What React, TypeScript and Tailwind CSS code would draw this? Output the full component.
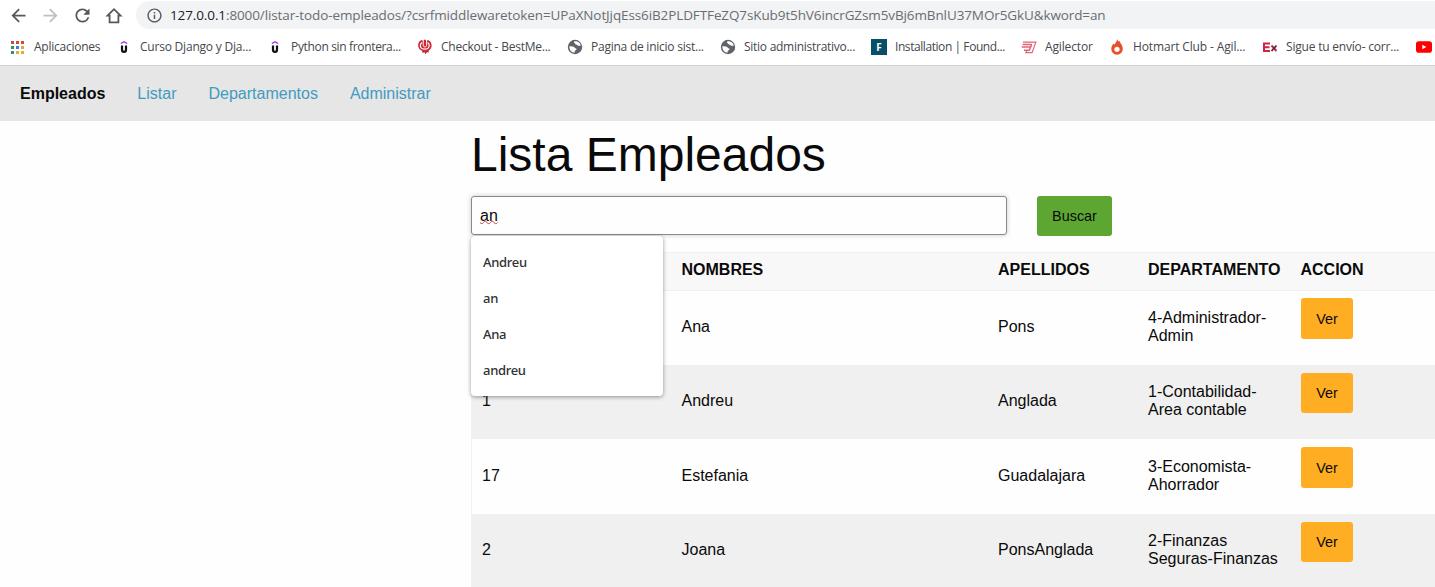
import React from "react";
import { MdArrowBack, MdArrowForward, MdRefresh, MdOutlineInfo } from "react-icons/md";

function UdemyIcon() {
  return (
    <svg viewBox="0 0 16 16" className="h-4 w-4">
      <path d="M4.800 5.200V3.700L8 1.900l3.200 1.800v1.500L8 3.500z" fill="#a435f0" />
      <path d="M6 6.500v4.200c0 1.400.7 2.100 2 2.100s2-.7 2-2.100V6.500" fill="none" stroke="#111" strokeWidth="2.200" />
    </svg>
  );
}

function GlobeIcon() {
  return (
    <svg viewBox="0 0 16 16" className="h-4 w-4">
      <circle cx="8" cy="8" r="7.200" fill="#5f6368" />
      <path d="M2.300 7.600c1.300-.5 3-.3 4.300.2 1 .4.9 1.300 1.900 1.400 1 .1 1.300.7.8 1.500-.6.8-1.600.8-1.700 1.700v1.400c-2.700 0-5.300-2.400-5.300-6.200z" fill="#fff" />
      <path d="M7.500 2.200c-.6.8-.8 1.700.2 2 .9.300.6 1.200 1.500 1.400 1 .2 1 .9 1.800 1.100 1 .2 1.800-.1 2.600.3.400-2.600-2.200-5.200-6.100-4.800z" fill="#fff" />
    </svg>
  );
}

function CheckoutIcon() {
  return (
    <svg viewBox="0 0 16 16" className="h-4 w-4">
      <path d="M4 1.300C1.800 2.500.9 4.600 1.200 7c.3 2.400 1.700 4 3.800 4.700l.6 2.200 1.800-.7 1.200 2.200 1.300-2.200 1.700.2.300-2c1.700-.8 2.600-2.400 2.700-4.600.1-2.400-1-4.400-3-5.500" fill="#cf2837" />
      <path d="M5 3.600C3.700 4.400 3.200 5.600 3.400 7c.3 2 2 3.200 4.400 3.200s4.100-1.200 4.400-3.200c.2-1.400-.3-2.600-1.600-3.400" fill="none" stroke="#fff" strokeWidth="1.200" />
      <path d="M6.200 1v5.200c0 1 .6 1.700 1.700 1.700s1.700-.7 1.700-1.700V1" fill="none" stroke="#fff" strokeWidth="1" />
      <path d="M7.900.8v5.400" stroke="#cf2837" strokeWidth="1.800" />
    </svg>
  );
}

function FoundationIcon() {
  return (
    <span className="flex h-4 w-4 items-center justify-center bg-[#074e68] text-[10px] leading-none font-bold text-white">F</span>
  );
}

function AgilectorIcon() {
  return (
    <svg viewBox="0 0 16 16" className="h-4 w-4" fill="none" stroke="#e06673">
      <path d="M2 3.200h12.800l-3.700 10.400H4.800l1.300-2.400" strokeWidth="1.200" />
      <path d="M1.500 5.500h9.500M.8 8h9.200M10.800 5.500 8.300 11.200H3" strokeWidth="1.500" />
    </svg>
  );
}

function HotmartIcon() {
  return (
    <svg viewBox="0 0 16 16" className="h-4 w-4">
      <path d="M8.200.3c.4 1 .6 1.700 1.200 2.300l.9-.9c.3 1.500 3.500 4.200 3.500 8A5.700 5.900 0 0 1 8 15.800 5.700 5.900 0 0 1 2.300 9.700c0-2.500 1.300-3.900 2.300-5.300l.9 1C6.800 4 7.700 2.400 8.200.3z" fill="#e6502d" />
      <circle cx="8" cy="10.300" r="2.600" fill="#fff" />
    </svg>
  );
}

function ExIcon() {
  return (
    <svg viewBox="0 0 16 16" className="h-4 w-4" fill="none">
      <path d="M8 4.400H2v7.600h6M2 8.200h5.500" stroke="#cf2343" strokeWidth="2" />
      <path d="m9.500 6.500 5 5.500" stroke="#cf2343" strokeWidth="2" />
      <path d="m14.500 6.500-5 5.500" stroke="#56213f" strokeWidth="1.800" />
    </svg>
  );
}

function YoutubeIcon() {
  return (
    <svg viewBox="0 0 16 16" className="h-4 w-4">
      <rect y="2.300" width="16" height="11.400" rx="2.800" fill="#f00" />
      <path d="M6.300 5.700v4.600L10.400 8z" fill="#fff" />
    </svg>
  );
}

const appColors = [
  "bg-[#d9453d]", "bg-[#d9453d]", "bg-[#d9453d]",
  "bg-[#2f9360]", "bg-[#3b7de0]", "bg-[#e6a93c]",
  "bg-[#2f9360]", "bg-[#e6a93c]", "bg-[#e6a93c]",
];

function AppsIcon() {
  return (
    <span className="grid grid-cols-3 gap-[2px]">
      {appColors.map((c, i) => (
        <span key={i} className={`h-[3px] w-[3px] ${c}`} />
      ))}
    </span>
  );
}

const bookmarks = [
  { label: "Aplicaciones", icon: <AppsIcon />, box: "w-[107px]", gap: "w-[25px] pl-[2px]", text: "tracking-[-0.25px]" },
  { label: "Curso Django y Dja...", icon: <UdemyIcon />, box: "w-[151px]", gap: "w-[24px]", text: "tracking-[-0.21px]" },
  { label: "Python sin frontera...", icon: <UdemyIcon />, box: "w-[150px]", gap: "w-[24px]", text: "tracking-[-0.34px]" },
  { label: "Checkout - BestMe...", icon: <CheckoutIcon />, box: "w-[150px]", gap: "w-[24px]", text: "tracking-[-0.23px]" },
  { label: "Pagina de inicio sist...", icon: <GlobeIcon />, box: "w-[153px]", gap: "w-[24px]", text: "tracking-[-0.24px]" },
  { label: "Sitio administrativo...", icon: <GlobeIcon />, box: "w-[151px]", gap: "w-[24px]", text: "tracking-[-0.27px]" },
  { label: "Installation | Found...", icon: <FoundationIcon />, box: "w-[150px]", gap: "w-[24px]", text: "tracking-[-0.43px]" },
  { label: "Agilector", icon: <AgilectorIcon />, box: "w-[88px]", gap: "w-[24px]", text: "tracking-[-0.14px]" },
  { label: "Hotmart Club - Agil...", icon: <HotmartIcon />, box: "w-[153px]", gap: "w-[24px]", text: "tracking-[-0.14px]" },
  { label: "Sigue tu envío- corr...", icon: <ExIcon />, box: "w-[154px]", gap: "w-[24px]", text: "tracking-[-0.20px]" },
  { label: "", icon: <YoutubeIcon />, box: "w-[16px]", gap: "w-[16px]", text: "" },
];

function BrowserBar() {
  return (
    <div className="h-[66px] overflow-hidden border-b border-[#d3d3d3] bg-white font-['Open_Sans','Noto_Sans',sans-serif]">
      <div className="flex h-[29px] items-center pt-px pl-[7.500px] text-[#55585c]">
        <MdArrowBack className="mr-[11px] h-[21px] w-[21px] shrink-0" />
        <MdArrowForward className="mr-[11px] h-[21px] w-[21px] shrink-0 text-[#bdbfc1]" />
        <MdRefresh className="mr-[11px] h-[21px] w-[21px] shrink-0" />
        <svg viewBox="0 0 21 21" className="h-[21px] w-[21px] shrink-0" fill="none" stroke="currentColor" strokeWidth="1.800">
          <path d="M4.300 10.700H5.600V17.300h8.800V10.700H16.500L10 4.200 3.500 10.700z" />
        </svg>
        <div className="ml-[11.500px] flex h-7 flex-1 items-center rounded-l-full bg-[#f1f3f4]">
          <MdOutlineInfo className="ml-[9.500px] h-[17px] w-[17px] shrink-0" />
          <span className="ml-[7.500px] text-[13.500px] leading-7 tracking-[-0.110px] whitespace-nowrap text-[#6a6d71]">
            <span className="text-[#202124]">127.0.0.1</span>:8000/listar-todo-empleados/?csrfmiddlewaretoken=UPaXNotJjqEss6iB2PLDFTFeZQ7sKub9t5hV6incrGZsm5vBj6mBnlU37MOr5GkU&amp;kword=an
          </span>
        </div>
      </div>
      <div className="flex h-[36px] items-center pl-[9px] text-[12px] text-[#45484c]">
        {bookmarks.map((b, i) => (
          <div key={i} className={`flex shrink-0 items-center ${b.box}`}>
            <span className={`flex shrink-0 ${b.gap}`}>{b.icon}</span>
            <span className={`whitespace-nowrap ${b.text}`}>{b.label}</span>
          </div>
        ))}
      </div>
    </div>
  );
}

const rows = [
  { id: "", first: "Ana", last: "Pons", dept: ["4-Administrador-", "Admin"], h: "h-[74px] bg-[#fefefe]", btn: "mt-[7px] h-[41px]" },
  { id: "1", first: "Andreu", last: "Anglada", dept: ["1-Contabilidad-", "Area contable"], h: "h-[74px] bg-[#f0f0f0]", btn: "mt-[8px] h-[40px]" },
  { id: "17", first: "Estefania", last: "Guadalajara", dept: ["3-Economista-", "Ahorrador"], h: "h-[75px] bg-[#fefefe]", btn: "mt-[8px] h-[41px]" },
  { id: "2", first: "Joana", last: "PonsAnglada", dept: ["2-Finanzas", "Seguras-Finanzas"], h: "h-[74px] bg-[#f0f0f0]", btn: "mt-[8px] h-[40px]" },
];

const cols = "grid grid-cols-[199.500px_316.500px_150px_152.500px_1fr] pl-[10px]";

export default function App() {
  return (
    <div className="h-[587px] w-[1435px] overflow-hidden bg-[#fefefe] font-['Liberation_Sans',Arial,sans-serif] text-[16px] text-[#0a0a0a]">
      <BrowserBar />
      <nav className="flex h-[55px] items-center gap-8 bg-[#e6e6e6] pl-5 text-[#419bc0]">
        <span className="font-bold text-[#0a0a0a]">Empleados</span>
        <a>Listar</a>
        <a>Departamentos</a>
        <a>Administrar</a>
      </nav>
      <main className="ml-[471px]">
        <h1 className="h-[75px] text-[48px] leading-[67px]">Lista Empleados</h1>
        <div className="flex h-[56px] items-start">
          <div className="relative">
            <div className="flex h-[39px] w-[536px] items-center rounded-[3px] border border-[#8a8a8a] bg-[#fefefe] pl-2 shadow-[0_0_5px_#cacaca]">
              <span className="underline decoration-[#e23b3b] decoration-wavy decoration-1 underline-offset-[-0.500px] [text-decoration-skip-ink:none]">an</span>
            </div>
            <div className="absolute top-[40px] left-0 z-10 h-[160px] w-[192px] rounded-[4px] bg-white pt-[9px] font-['Noto_Sans',sans-serif] text-[13px] font-medium tracking-[-0.300px] text-[#303134] shadow-[0_1px_4px_rgba(0,0,0,0.4)]">
              {["Andreu", "an", "Ana", "andreu"].map((s) => (
                <div key={s} className="flex h-9 items-center pl-3">{s}</div>
              ))}
            </div>
          </div>
          <button className="ml-[30px] h-[40px] w-[75px] rounded-[3px] bg-[#5da632] pt-px text-[14.400px]">Buscar</button>
        </div>
        <section className="border-l border-[#f1f1f1]">
          <div className={`${cols} h-[39px] items-center border-y border-[#f0f0f0] bg-[#f8f8f8] pb-[3px] font-bold`}>
            <span />
            <span>NOMBRES</span>
            <span>APELLIDOS</span>
            <span>DEPARTAMENTO</span>
            <span>ACCION</span>
          </div>
          {rows.map((r) => (
            <div key={r.first} className={`${cols} items-center ${r.h}`}>
              <span className="pb-[2px]">{r.id}</span>
              <span className="pb-[2px]">{r.first}</span>
              <span className="pb-[2px]">{r.last}</span>
              <span className="pb-[2px] leading-[18px]">{r.dept[0]}<br />{r.dept[1]}</span>
              <button className={`w-[52px] self-start rounded-[3px] bg-[#ffae24] pt-[2px] pl-px text-[14.400px] ${r.btn}`}>Ver</button>
            </div>
          ))}
        </section>
      </main>
    </div>
  );
}
